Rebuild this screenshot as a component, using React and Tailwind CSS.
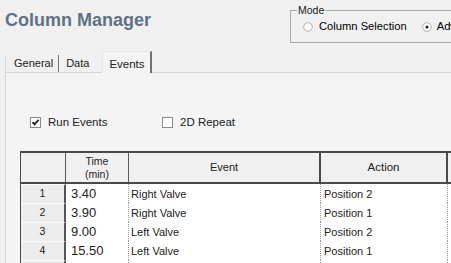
import React from 'react';

const rows = [
  { n: 1, time: '3.40', event: 'Right Valve', action: 'Position 2' },
  { n: 2, time: '3.90', event: 'Right Valve', action: 'Position 1' },
  { n: 3, time: '9.00', event: 'Left Valve', action: 'Position 2' },
  { n: 4, time: '15.50', event: 'Left Valve', action: 'Position 1' },
];

function CheckBox({ checked }) {
  return (
    <svg width="11" height="11" viewBox="0 0 11 11" className="shrink-0">
      <rect x="0.5" y="0.5" width="10" height="10" fill="#fff" stroke="#8a8a8a" />
      {checked && <path d="M2.5 5.2 L4.5 7.4 L8.6 2.8" fill="none" stroke="#222" strokeWidth="1.8" />}
    </svg>
  );
}

function Radio({ selected }) {
  return (
    <svg width="10" height="10" viewBox="0 0 10 10" className="shrink-0">
      <circle cx="5" cy="5" r="4.3" fill="#fff" stroke="#b0b0b0" />
      {selected && <circle cx="5" cy="5" r="1.6" fill="#222" />}
    </svg>
  );
}

export default function App() {
  return (
    <div className="w-[451px] h-[263px] overflow-hidden bg-[#f0f0f0] font-['Liberation_Sans',Arial,sans-serif] text-black flex flex-col">
      {/* top bar */}
      <div className="flex h-[50px] shrink-0">
        <div className="w-[290px] shrink-0 pl-[5px] pt-[11px] text-[18px] font-bold leading-none text-[#5d7286]">
          Column Manager
        </div>
        <fieldset className="shrink-0 w-[200px] h-[38px] mt-[5px] border border-[#a8a8a8] pl-[6px] pr-0">
          <legend className="text-[10.5px] leading-none px-[1px] text-[#222]">Mode</legend>
          <div className="flex items-center h-[22px] text-[11.2px] pl-[6px]">
            <Radio />
            <span className="ml-[6px]">Column Selection</span>
            <span className="ml-[15px]"><Radio selected /></span>
            <span className="ml-[5px]">Advanced</span>
          </div>
        </fieldset>
      </div>

      {/* tabs */}
      <div className="flex items-end h-[22px] shrink-0 pl-[5px] text-[11px] text-[#222]">
        <div className="h-[17px] pl-[8px] pr-[5px] border-l border-[#d8d8d8] flex items-center">General</div>
        <div className="h-[17px] pl-[7px] pr-[13px] border-l border-[#7a7a7a] flex items-center">Data</div>
        <div className="h-[22px] w-[50px] pl-[6px] border-l border-t border-[#e6e6e6] border-r-2 border-r-[#707070] bg-[#f4f4f4] flex items-start pt-[4px] text-[11.5px] -mb-px relative">
          Events
        </div>
      </div>

      {/* panel */}
      <div className="flex-1 ml-[5px] border-l border-t border-[#d6d6d6] bg-[#f4f4f4] pl-[14px]">
        <div className="flex items-center h-[11px] mt-[44px] pl-[10px] text-[11.5px] text-[#222]">
          <div className="flex items-center w-[132px]">
            <CheckBox checked />
            <span className="ml-[7px]">Run Events</span>
          </div>
          <div className="flex items-center">
            <CheckBox />
            <span className="ml-[7px]">2D Repeat</span>
          </div>
        </div>

        <div className="mt-[23px] w-[480px] text-[11px] text-[#222]">
          <div className="grid grid-cols-[45px_63px_192px_127px_53px] h-[33px] border-t-2 border-b-2 border-l border-[#4a4a4a] bg-[#f0f0f0]">
            <div className="border-r border-[#5a5a5a]" />
            <div className="border-r border-[#5a5a5a] flex flex-col items-center justify-center leading-[13px] text-[10.5px]">
              <span>Time</span>
              <span>(min)</span>
            </div>
            <div className="border-r-2 border-[#4a4a4a] flex items-center justify-center">Event</div>
            <div className="border-r-2 border-[#4a4a4a] flex items-center justify-center text-[11.5px]">Action</div>
            <div />
          </div>
          {rows.map((r) => (
            <div key={r.n} className="grid grid-cols-[45px_63px_192px_127px_53px] h-[19px] border-l border-[#4a4a4a]">
              <div className="bg-[#ececec] border-r-2 border-b border-r-[#555] border-b-[#8a8a8a] border-t border-t-[#fafafa] flex items-center justify-center text-[10.5px]">
                {r.n}
              </div>
              <div className="bg-white border-r border-b border-dotted border-[#9a9a9a] flex items-center pl-[5px] text-[13px]">
                {r.time}
              </div>
              <div className="bg-white border-r border-b border-dotted border-[#9a9a9a] flex items-center pl-[2px]">
                {r.event}
              </div>
              <div className="bg-white border-r border-b border-dotted border-[#9a9a9a] flex items-center pl-[3px]">
                {r.action}
              </div>
              <div className="bg-white border-b border-dotted border-[#9a9a9a]" />
            </div>
          ))}
          <div className="grid grid-cols-[45px_63px_192px_127px_53px] h-[19px] border-l border-[#4a4a4a]">
            <div className="bg-[#ececec] border-r-2 border-r-[#555] border-t border-t-[#fafafa]" />
            <div className="bg-white border-r border-dotted border-[#9a9a9a]" />
            <div className="bg-white border-r border-dotted border-[#9a9a9a]" />
            <div className="bg-white border-r border-dotted border-[#9a9a9a]" />
            <div className="bg-white" />
          </div>
        </div>
      </div>
    </div>
  );
}
